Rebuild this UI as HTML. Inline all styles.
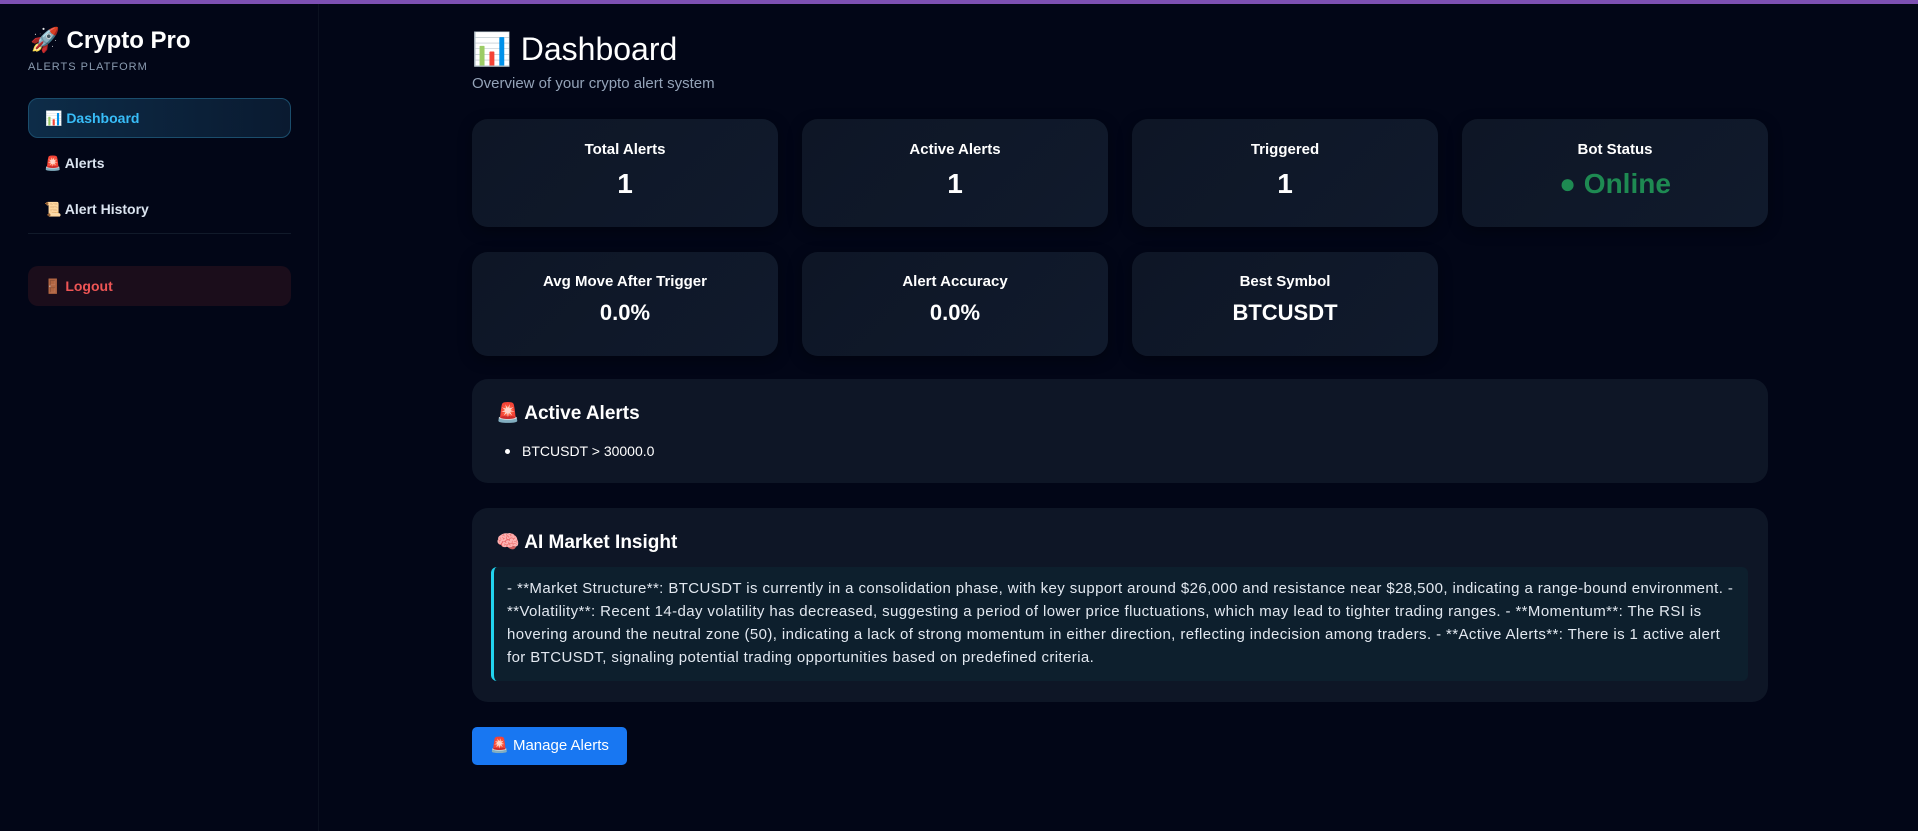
<!DOCTYPE html>
<html><head><meta charset="utf-8"><style>
*{box-sizing:border-box;margin:0;padding:0}
body{width:1918px;height:831px;overflow:hidden;background:#020617;font-family:"Liberation Sans","Noto Sans CJK SC",sans-serif;color:#fff;position:relative}
.top{position:absolute;left:0;top:0;width:1918px;height:4px;background:#7d50b3}
.side{position:absolute;left:0;top:4px;width:319px;height:827px;background:#020617;border-right:1px solid #0b1120}
.logo{position:absolute;left:30px;top:22px;font-size:24px;font-weight:bold;white-space:nowrap}
.sub{position:absolute;left:28px;top:57px;font-size:11px;letter-spacing:1px;color:#8a9bb0}
.nav{position:absolute;left:28px;width:263px;height:40px;border-radius:10px;font-size:14px;font-weight:bold;padding-left:16px;line-height:40px;color:#dbe4f0}
.act{background:linear-gradient(90deg,#0d2c48,#0a1a30);border:1px solid #1b4d6c;color:#38bdf8;line-height:38px}
.hr{position:absolute;left:28px;top:229px;width:263px;height:1px;background:#111a2a}
.logout{background:#1b0d1b;color:#ee5555}
.card{position:absolute;background:linear-gradient(135deg,#0e1626,#101a2c);border-radius:16px;text-align:center;box-shadow:0 4px 14px rgba(0,0,0,.35)}
.card .l{font-size:15px;font-weight:bold;margin-top:22px}
.card .v{font-size:28px;font-weight:bold;margin-top:10px}
.r2 .l{margin-top:21px}.r2 .v{font-size:22px;margin-top:10px}
.panel{position:absolute;left:472px;width:1296px;background:#0e1626;border-radius:16px}
.ptitle{font-size:19px;font-weight:bold;position:absolute;left:24px}
</style></head><body>
<div class="top"></div>
<div class="side">
<div class="logo">🚀 Crypto Pro</div>
<div class="sub">ALERTS PLATFORM</div>
<div class="nav act" style="top:94px">📊 Dashboard</div>
<div class="nav" style="top:139px">🚨 Alerts</div>
<div class="nav" style="top:185px">📜 Alert History</div>
<div class="hr"></div>
<div class="nav logout" style="top:262px">🚪 Logout</div>
</div>
<div style="position:absolute;left:472px;top:30px;font-size:32px;white-space:nowrap">📊 Dashboard</div>
<div style="position:absolute;left:472px;top:75px;font-size:15px;color:#94a3b8">Overview of your crypto alert system</div>

<div class="card" style="left:472px;top:119px;width:306px;height:108px"><div class="l">Total Alerts</div><div class="v">1</div></div>
<div class="card" style="left:802px;top:119px;width:306px;height:108px"><div class="l">Active Alerts</div><div class="v">1</div></div>
<div class="card" style="left:1132px;top:119px;width:306px;height:108px"><div class="l">Triggered</div><div class="v">1</div></div>
<div class="card" style="left:1462px;top:119px;width:306px;height:108px"><div class="l">Bot Status</div><div class="v" style="color:#1e8a52">● Online</div></div>

<div class="card r2" style="left:472px;top:252px;width:306px;height:104px"><div class="l">Avg Move After Trigger</div><div class="v">0.0%</div></div>
<div class="card r2" style="left:802px;top:252px;width:306px;height:104px"><div class="l">Alert Accuracy</div><div class="v">0.0%</div></div>
<div class="card r2" style="left:1132px;top:252px;width:306px;height:104px"><div class="l">Best Symbol</div><div class="v">BTCUSDT</div></div>

<div class="panel" style="top:379px;height:104px">
<div class="ptitle" style="top:22px">🚨 Active Alerts</div>
<div style="position:absolute;left:50px;top:64px;font-size:14px">BTCUSDT &gt; 30000.0</div>
<div style="position:absolute;left:33px;top:70px;width:5px;height:5px;border-radius:50%;background:#fff"></div>
</div>

<div class="panel" style="top:508px;height:194px">
<div class="ptitle" style="top:22px">🧠 AI Market Insight</div>
<div style="position:absolute;left:19px;top:59px;width:1257px;height:114px;background:#0d1f2d;border-left:3px solid #22d3ee;border-radius:6px;padding:10px 6px 0 13px;font-size:15px;letter-spacing:0.4px;line-height:23px;color:#e2e8f0">- **Market Structure**: BTCUSDT is currently in a consolidation phase, with key support around $26,000 and resistance near $28,500, indicating a range-bound environment. - **Volatility**: Recent 14-day volatility has decreased, suggesting a period of lower price fluctuations, which may lead to tighter trading ranges. - **Momentum**: The RSI is hovering around the neutral zone (50), indicating a lack of strong momentum in either direction, reflecting indecision among traders. - **Active Alerts**: There is 1 active alert for BTCUSDT, signaling potential trading opportunities based on predefined criteria.</div>
</div>

<div style="position:absolute;left:472px;top:727px;width:155px;height:38px;background:#1877f2;border-radius:5px;font-size:15px;line-height:38px;text-align:center">🚨 Manage Alerts</div>
</body></html>
